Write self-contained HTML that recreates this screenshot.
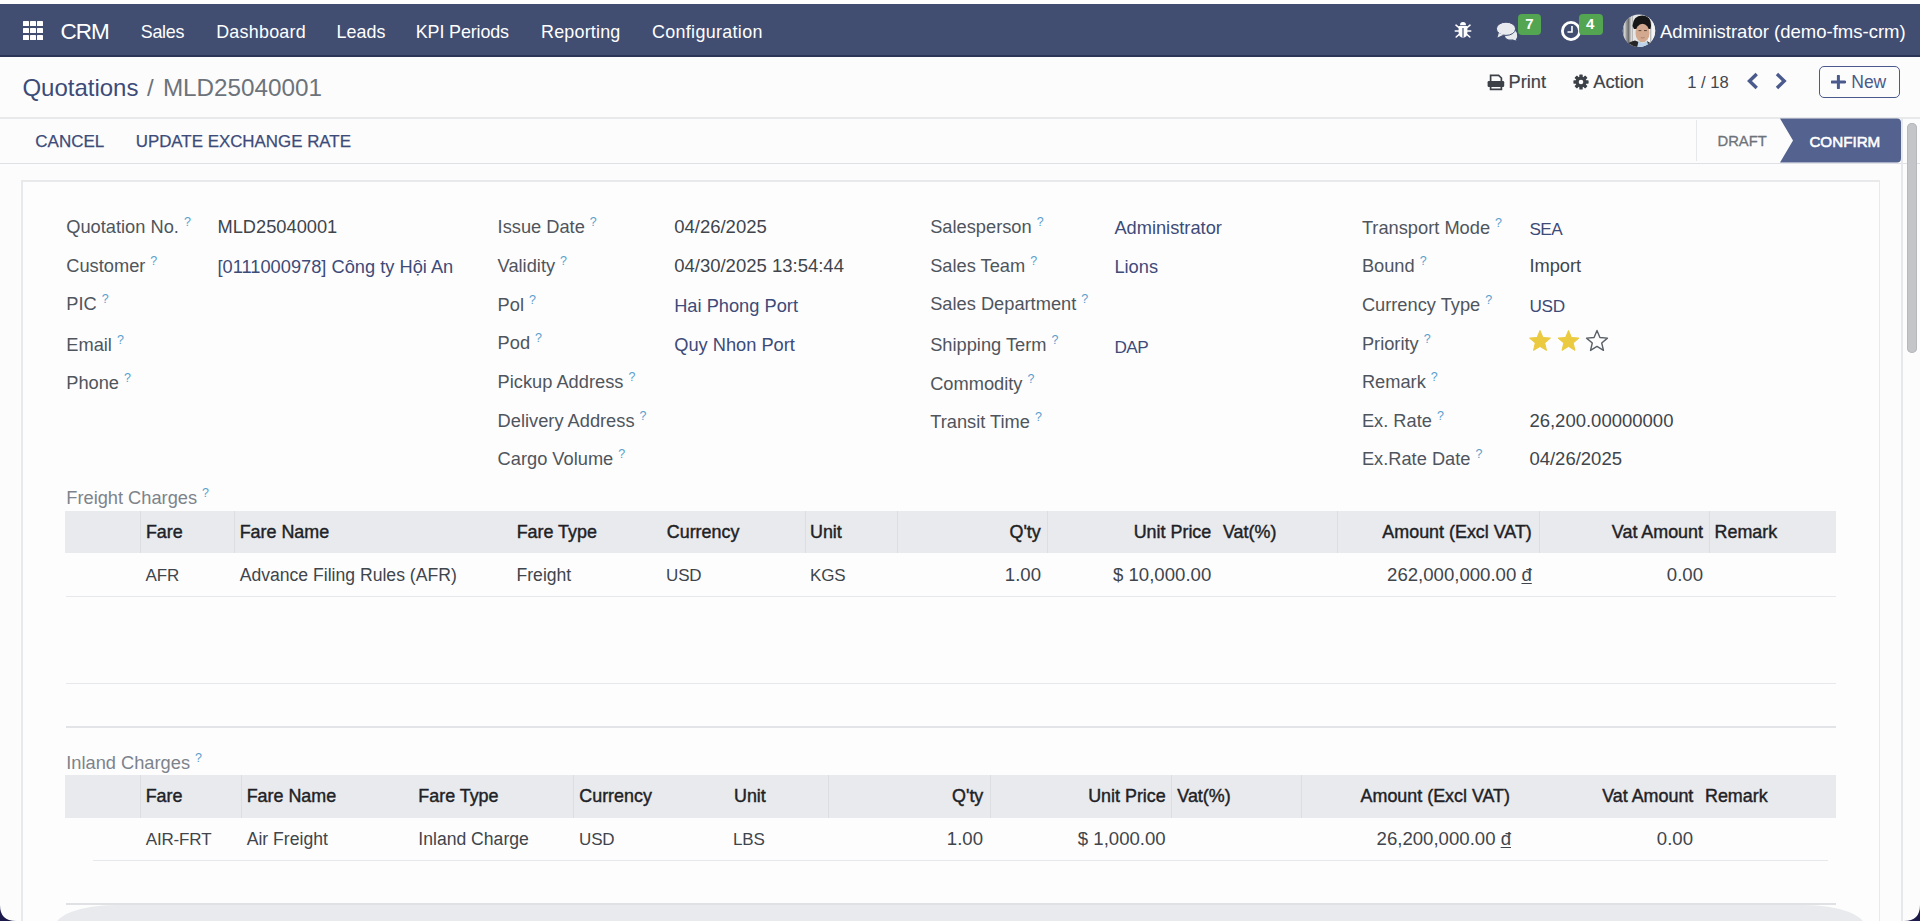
<!DOCTYPE html>
<html><head><meta charset="utf-8"><title>Quotation</title><style>
html,body{margin:0;padding:0;width:1920px;height:921px;overflow:hidden;background:#fcfcfd;}
body{position:relative;font-family:'Liberation Sans', sans-serif;}
.t{position:absolute;white-space:nowrap;font-family:'Liberation Sans', sans-serif;}
.r{position:absolute;}
.vnd{text-decoration:underline;text-underline-offset:2px;text-decoration-thickness:1.3px;}
sup.q{font-size:12.5px;color:#5b9fcc;vertical-align:0;position:relative;top:-7px;margin-left:5px;}
</style></head>
<body>
<div class="r" style="left:0px;top:0px;width:1920px;height:921px;background:#fcfcfd;"></div>
<div class="r" style="left:0px;top:0px;width:1920px;height:4px;background:#ffffff;"></div>
<div class="r" style="left:0px;top:4px;width:1920px;height:52px;background:#414e72;"></div>
<div class="r" style="left:0px;top:55px;width:1920px;height:1.5px;background:#2b3656;"></div>
<div class="r" style="left:23px;top:20.6px;width:5.6px;height:5.6px;background:#ffffff;border-radius:0.6px"></div>
<div class="r" style="left:23px;top:27.6px;width:5.6px;height:5.6px;background:#ffffff;border-radius:0.6px"></div>
<div class="r" style="left:23px;top:34.6px;width:5.6px;height:5.6px;background:#ffffff;border-radius:0.6px"></div>
<div class="r" style="left:30px;top:20.6px;width:5.6px;height:5.6px;background:#ffffff;border-radius:0.6px"></div>
<div class="r" style="left:30px;top:27.6px;width:5.6px;height:5.6px;background:#ffffff;border-radius:0.6px"></div>
<div class="r" style="left:30px;top:34.6px;width:5.6px;height:5.6px;background:#ffffff;border-radius:0.6px"></div>
<div class="r" style="left:37px;top:20.6px;width:5.6px;height:5.6px;background:#ffffff;border-radius:0.6px"></div>
<div class="r" style="left:37px;top:27.6px;width:5.6px;height:5.6px;background:#ffffff;border-radius:0.6px"></div>
<div class="r" style="left:37px;top:34.6px;width:5.6px;height:5.6px;background:#ffffff;border-radius:0.6px"></div>
<div class="t" style="top:18.00px;font-size:22.5px;line-height:28px;color:#fff;letter-spacing:-1px;left:60.5px;">CRM</div>
<div class="t" style="top:20.60px;font-size:17.9px;line-height:22px;color:#fff;letter-spacing:-0.3px;left:140.8px;">Sales</div>
<div class="t" style="top:20.60px;font-size:17.9px;line-height:22px;color:#fff;letter-spacing:0.25px;left:216.2px;">Dashboard</div>
<div class="t" style="top:20.60px;font-size:17.9px;line-height:22px;color:#fff;letter-spacing:0px;left:336.6px;">Leads</div>
<div class="t" style="top:20.60px;font-size:17.9px;line-height:22px;color:#fff;letter-spacing:-0.13px;left:415.8px;">KPI Periods</div>
<div class="t" style="top:20.60px;font-size:17.9px;line-height:22px;color:#fff;letter-spacing:0.2px;left:541.1px;">Reporting</div>
<div class="t" style="top:20.60px;font-size:17.9px;line-height:22px;color:#fff;letter-spacing:0.33px;left:652px;">Configuration</div>
<div class="t" style="top:19.59px;font-size:18.5px;line-height:23px;color:#fff;left:1660px;">Administrator (demo-fms-crm)</div>
<svg class="r" style="left:1454px;top:21px" width="18" height="18" viewBox="0 0 18 18"><path d="M6 4.2 Q6 1 9 1 Q12 1 12 4.2 Z" fill="#fff"/><path d="M4.6 5 H13.4 V11.5 Q13.4 16.5 9 16.8 Q4.6 16.5 4.6 11.5 Z" fill="#fff"/><rect x="8.4" y="7" width="1.2" height="9.5" fill="#414e72"/><g stroke="#fff" stroke-width="1.6" stroke-linecap="round"><path d="M4.8 6.5 L2 4.2"/><path d="M13.2 6.5 L16 4.2"/><path d="M4.5 10 H1.3"/><path d="M13.5 10 H16.7"/><path d="M5 13.5 L2.2 16"/><path d="M13 13.5 L15.8 16"/></g></svg>
<svg class="r" style="left:1495px;top:21px" width="26" height="21" viewBox="0 0 26 21"><path d="M11 6 Q20 5.5 22.5 12 Q23.5 16 21.5 18.5 L23.5 20 Q19 20 17.5 19 Q12 20 9.5 16 Z" fill="#e9eaed" stroke="#414e72" stroke-width="1.2"/><ellipse cx="11" cy="7.8" rx="9.6" ry="6.6" fill="#e9eaed" stroke="#414e72" stroke-width="1"/><path d="M3.8 12 L2.5 16.5 L8.5 13.8 Z" fill="#e9eaed"/></svg>
<div class="r" style="left:1518px;top:13.5px;width:23px;height:21.5px;background:#53a551;border-radius:4px"></div>
<div class="t" style="top:14.10px;font-size:15px;line-height:19px;color:#fff;font-weight:bold;left:1525.2px;">7</div>
<svg class="r" style="left:1560px;top:20px" width="22" height="22" viewBox="0 0 22 22"><circle cx="11" cy="11" r="8.6" fill="none" stroke="#fff" stroke-width="2.8"/><path d="M12 6 V12 H7.5" fill="none" stroke="#fff" stroke-width="1.6"/></svg>
<div class="r" style="left:1578.75px;top:13.5px;width:24px;height:21.5px;background:#53a551;border-radius:4px"></div>
<div class="t" style="top:14.10px;font-size:15px;line-height:19px;color:#fff;font-weight:bold;left:1586px;">4</div>
<svg class="r" style="left:1622px;top:14px" width="34" height="34" viewBox="0 0 34 34"><defs><clipPath id="av"><circle cx="17" cy="16.8" r="16.2"/></clipPath></defs><g clip-path="url(#av)"><rect width="34" height="34" fill="#e6e6e6"/><rect x="0" y="0" width="11" height="34" fill="#9a9a9a"/><rect x="2" y="0" width="1.6" height="34" fill="#cfcfcf"/><rect x="5.5" y="0" width="1.6" height="34" fill="#6f6f6f"/><rect x="8.5" y="0" width="2" height="34" fill="#d8d8d8"/><rect x="26" y="0" width="8" height="34" fill="#f4f4f4"/><rect x="28" y="8" width="1.4" height="22" fill="#b9b9b9"/><path d="M10.5 12 Q11 1.2 20.5 1.4 Q29.5 1.8 29 11.5 L28.5 15 L12 15 Z" fill="#171717"/><ellipse cx="20.5" cy="19" rx="7" ry="9.3" fill="#d2a98e"/><path d="M12 13.5 Q13 5 20.5 5.2 Q28 5.5 28.6 13 Q25 8.8 20.5 9.2 Q15 9.5 12 13.5 Z" fill="#171717"/><path d="M16.5 16.6 H19.3 M22 16.6 H24.8" stroke="#5b4638" stroke-width="1"/><path d="M18.8 23.6 Q20.6 24.4 22.6 23.6" stroke="#a87a66" stroke-width="0.9" fill="none"/><path d="M3 34 Q5 28 13 26.5 L18 28.5 L15 34 Z" fill="#262626"/><path d="M15 34 L16.5 27 L21 29.5 L25 27 L27 34 Z" fill="#bcd3ea"/><path d="M25 27 L30 30 L31 34 L27 34 Z" fill="#333"/></g></svg>
<svg class="r" style="left:1487px;top:73.5px" width="18" height="17" viewBox="0 0 18 17"><path d="M3.6 7.5 V1.3 H11.6 L14.4 4 V7.5" fill="none" stroke="#3c4148" stroke-width="1.7"/><rect x="0.6" y="7" width="16.6" height="6" rx="1.2" fill="#3c4148"/><path d="M3.6 11.5 V15.3 H14.4 V11.5" fill="none" stroke="#3c4148" stroke-width="1.7"/></svg>
<svg class="r" style="left:1573px;top:73.5px" width="16" height="16" viewBox="0 0 16 16"><g transform="translate(8 8)" fill="#3c4148"><rect x="-1.7" y="-7.6" width="3.4" height="4" rx="0.6" transform="rotate(0)"/><rect x="-1.7" y="-7.6" width="3.4" height="4" rx="0.6" transform="rotate(45)"/><rect x="-1.7" y="-7.6" width="3.4" height="4" rx="0.6" transform="rotate(90)"/><rect x="-1.7" y="-7.6" width="3.4" height="4" rx="0.6" transform="rotate(135)"/><rect x="-1.7" y="-7.6" width="3.4" height="4" rx="0.6" transform="rotate(180)"/><rect x="-1.7" y="-7.6" width="3.4" height="4" rx="0.6" transform="rotate(225)"/><rect x="-1.7" y="-7.6" width="3.4" height="4" rx="0.6" transform="rotate(270)"/><rect x="-1.7" y="-7.6" width="3.4" height="4" rx="0.6" transform="rotate(315)"/><circle r="5.4"/></g><circle cx="8" cy="8" r="2.3" fill="#fcfcfd"/></svg>
<svg class="r" style="left:1745px;top:72px" width="44" height="18" viewBox="0 0 44 18"><path d="M10.5 3.2 L4.5 9 L10.5 14.8" fill="none" stroke="#4a5a8c" stroke-width="3.4" stroke-linecap="square"/><path d="M33.2 3.2 L39.2 9 L33.2 14.8" fill="none" stroke="#4a5a8c" stroke-width="3.4" stroke-linecap="square"/></svg>
<div class="r" style="left:1819px;top:65.5px;width:81px;height:32.2px;background:transparent;border:1.6px solid #4a5a8c;border-radius:5px;box-sizing:border-box"></div>
<svg class="r" style="left:1831px;top:74.5px" width="15" height="14" viewBox="0 0 15 14"><path d="M7.4 1 V13 M1 7 H13.8" stroke="#4a5a8c" stroke-width="3" stroke-linecap="round"/></svg>
<div class="t" style="top:70.74px;font-size:17.5px;line-height:22px;color:#4a5a8c;left:1851.25px;">New</div>
<div class="r" style="left:0px;top:117px;width:1920px;height:2px;background:#e8e9eb;"></div>
<div class="t" style="top:73.48px;font-size:24px;line-height:30px;color:#3d4b78;left:22.4px;">Quotations</div>
<div class="t" style="top:73.48px;font-size:24px;line-height:30px;color:#6c737a;left:147px;">/</div>
<div class="t" style="top:73.40px;font-size:24.25px;line-height:30px;color:#6c737a;left:162.9px;">MLD25040001</div>
<div class="t" style="top:70.18px;font-size:18.25px;line-height:23px;color:#3e434a;left:1508.5px;-webkit-text-stroke:0.2px #3e434a;">Print</div>
<div class="t" style="top:70.18px;font-size:18.25px;line-height:23px;color:#3e434a;left:1593.3px;-webkit-text-stroke:0.2px #3e434a;">Action</div>
<div class="t" style="top:71.75px;font-size:16.6px;line-height:21px;color:#42474e;left:1687.2px;">1 / 18</div>
<div class="r" style="left:0px;top:162.5px;width:1920px;height:1.2px;background:#dfe1e6;"></div>
<div class="t" style="top:131.41px;font-size:17px;line-height:21px;color:#3d4b78;left:35.3px;-webkit-text-stroke:0.25px #3d4b78;">CANCEL</div>
<div class="t" style="top:131.04px;font-size:16.9px;line-height:21px;color:#3d4b78;left:135.7px;-webkit-text-stroke:0.25px #3d4b78;">UPDATE EXCHANGE RATE</div>
<div class="r" style="left:1695.5px;top:120px;width:1px;height:41px;background:#e6e8eb;"></div>
<div class="t" style="top:132.14px;font-size:14.75px;line-height:18px;color:#6c737a;left:1717.5px;-webkit-text-stroke:0.3px #6c737a;">DRAFT</div>
<svg class="r" style="left:1779px;top:118px" width="124" height="46" viewBox="0 0 124 46"><path d="M1 0.5 H118 Q122 0.5 122 4.5 V40.5 Q122 44.5 118 44.5 H1 L14 22.5 Z" fill="#546290"/></svg>
<div class="t" style="top:131.73px;font-size:15.2px;line-height:19px;color:#fff;left:1809.4px;-webkit-text-stroke:0.55px #fff;">CONFIRM</div>
<div class="r" style="left:21px;top:180px;width:1859px;height:760px;background:#fdfdfe;border:2px solid #e8e9eb;border-right-width:1.5px;box-sizing:border-box"></div>
<div class="t" style="top:215.08px;font-size:18.25px;line-height:23px;color:#4f555c;left:66.25px;">Quotation No.<sup class="q">?</sup></div>
<div class="t" style="top:253.68px;font-size:18.25px;line-height:23px;color:#4f555c;left:66.25px;">Customer<sup class="q">?</sup></div>
<div class="t" style="top:292.38px;font-size:18.25px;line-height:23px;color:#4f555c;left:66.25px;">PIC<sup class="q">?</sup></div>
<div class="t" style="top:332.98px;font-size:18.25px;line-height:23px;color:#4f555c;left:66.25px;">Email<sup class="q">?</sup></div>
<div class="t" style="top:371.48px;font-size:18.25px;line-height:23px;color:#4f555c;left:66.25px;">Phone<sup class="q">?</sup></div>
<div class="t" style="top:215.18px;font-size:18.25px;line-height:23px;color:#40454b;left:217.5px;">MLD25040001</div>
<div class="t" style="top:254.68px;font-size:18.25px;line-height:23px;color:#3d4b78;left:217.5px;">[0111000978] Công ty Hội An</div>
<div class="t" style="top:215.08px;font-size:18.25px;line-height:23px;color:#4f555c;left:497.6px;">Issue Date<sup class="q">?</sup></div>
<div class="t" style="top:254.08px;font-size:18.25px;line-height:23px;color:#4f555c;left:497.6px;">Validity<sup class="q">?</sup></div>
<div class="t" style="top:292.78px;font-size:18.25px;line-height:23px;color:#4f555c;left:497.6px;">Pol<sup class="q">?</sup></div>
<div class="t" style="top:331.48px;font-size:18.25px;line-height:23px;color:#4f555c;left:497.6px;">Pod<sup class="q">?</sup></div>
<div class="t" style="top:369.58px;font-size:18.25px;line-height:23px;color:#4f555c;left:497.6px;">Pickup Address<sup class="q">?</sup></div>
<div class="t" style="top:408.58px;font-size:18.25px;line-height:23px;color:#4f555c;left:497.6px;">Delivery Address<sup class="q">?</sup></div>
<div class="t" style="top:446.68px;font-size:18.25px;line-height:23px;color:#4f555c;left:497.6px;">Cargo Volume<sup class="q">?</sup></div>
<div class="t" style="top:215.09px;font-size:18.5px;line-height:23px;color:#40454b;left:674.2px;">04/26/2025</div>
<div class="t" style="top:254.09px;font-size:18.5px;line-height:23px;color:#40454b;left:674.2px;">04/30/2025 13:54:44</div>
<div class="t" style="top:294.18px;font-size:18.25px;line-height:23px;color:#3d4b78;left:674.2px;">Hai Phong Port</div>
<div class="t" style="top:332.68px;font-size:18.25px;line-height:23px;color:#3d4b78;left:674.2px;">Quy Nhon Port</div>
<div class="t" style="top:214.78px;font-size:18.25px;line-height:23px;color:#4f555c;left:930.2px;">Salesperson<sup class="q">?</sup></div>
<div class="t" style="top:254.08px;font-size:18.25px;line-height:23px;color:#4f555c;left:930.2px;">Sales Team<sup class="q">?</sup></div>
<div class="t" style="top:292.28px;font-size:18.25px;line-height:23px;color:#4f555c;left:930.2px;">Sales Department<sup class="q">?</sup></div>
<div class="t" style="top:333.18px;font-size:18.25px;line-height:23px;color:#4f555c;left:930.2px;">Shipping Term<sup class="q">?</sup></div>
<div class="t" style="top:372.18px;font-size:18.25px;line-height:23px;color:#4f555c;left:930.2px;">Commodity<sup class="q">?</sup></div>
<div class="t" style="top:410.48px;font-size:18.25px;line-height:23px;color:#4f555c;left:930.2px;">Transit Time<sup class="q">?</sup></div>
<div class="t" style="top:216.48px;font-size:18.25px;line-height:23px;color:#3d4b78;left:1114.4px;">Administrator</div>
<div class="t" style="top:254.78px;font-size:18.25px;line-height:23px;color:#3d4b78;left:1114.4px;">Lions</div>
<div class="t" style="top:335.54px;font-size:17.2px;line-height:22px;color:#3d4b78;letter-spacing:-0.5px;left:1114.4px;">DAP</div>
<div class="t" style="top:215.88px;font-size:18.25px;line-height:23px;color:#4f555c;left:1361.9px;">Transport Mode<sup class="q">?</sup></div>
<div class="t" style="top:254.08px;font-size:18.25px;line-height:23px;color:#4f555c;left:1361.9px;">Bound<sup class="q">?</sup></div>
<div class="t" style="top:293.38px;font-size:18.25px;line-height:23px;color:#4f555c;left:1361.9px;">Currency Type<sup class="q">?</sup></div>
<div class="t" style="top:331.58px;font-size:18.25px;line-height:23px;color:#4f555c;left:1361.9px;">Priority<sup class="q">?</sup></div>
<div class="t" style="top:369.88px;font-size:18.25px;line-height:23px;color:#4f555c;left:1361.9px;">Remark<sup class="q">?</sup></div>
<div class="t" style="top:409.18px;font-size:18.25px;line-height:23px;color:#4f555c;left:1361.9px;">Ex. Rate<sup class="q">?</sup></div>
<div class="t" style="top:447.38px;font-size:18.25px;line-height:23px;color:#4f555c;left:1361.9px;">Ex.Rate Date<sup class="q">?</sup></div>
<div class="t" style="top:217.74px;font-size:17.2px;line-height:22px;color:#3d4b78;letter-spacing:-0.5px;left:1529.4px;">SEA</div>
<div class="t" style="top:254.18px;font-size:18.25px;line-height:23px;color:#40454b;left:1529.4px;">Import</div>
<div class="t" style="top:295.24px;font-size:17.2px;line-height:22px;color:#3d4b78;letter-spacing:-0.2px;left:1529.4px;">USD</div>
<div class="t" style="top:409.09px;font-size:18.5px;line-height:23px;color:#40454b;left:1529.4px;">26,200.00000000</div>
<div class="t" style="top:447.29px;font-size:18.5px;line-height:23px;color:#40454b;left:1529.4px;">04/26/2025</div>
<svg class="r" style="left:1525px;top:326px" width="90" height="30" viewBox="0 0 90 30"><polygon points="15.00,4.50 17.91,11.50 25.46,12.10 19.71,17.03 21.47,24.40 15.00,20.45 8.53,24.40 10.29,17.03 4.54,12.10 12.09,11.50" fill="#ebca40" stroke="#ebca40" stroke-width="1" stroke-linejoin="round"/><polygon points="43.50,4.50 46.41,11.50 53.96,12.10 48.21,17.03 49.97,24.40 43.50,20.45 37.03,24.40 38.79,17.03 33.04,12.10 40.59,11.50" fill="#ebca40" stroke="#ebca40" stroke-width="1" stroke-linejoin="round"/><polygon points="72.00,4.50 74.91,11.50 82.46,12.10 76.71,17.03 78.47,24.40 72.00,20.45 65.53,24.40 67.29,17.03 61.54,12.10 69.09,11.50" fill="none" stroke="#5a6068" stroke-width="1.4" stroke-linejoin="round"/></svg>
<div class="t" style="top:486.38px;font-size:18.25px;line-height:23px;color:#7d838b;left:66.25px;">Freight Charges<sup class="q">?</sup></div>
<div class="r" style="left:65px;top:511px;width:1771px;height:42.39999999999998px;background:#e9eaed;"></div>
<div class="r" style="left:139.6px;top:511px;width:1px;height:42.39999999999998px;background:#dcdee2;"></div>
<div class="r" style="left:233.5px;top:511px;width:1px;height:42.39999999999998px;background:#dcdee2;"></div>
<div class="r" style="left:804.5px;top:511px;width:1px;height:42.39999999999998px;background:#dcdee2;"></div>
<div class="r" style="left:896.8px;top:511px;width:1px;height:42.39999999999998px;background:#dcdee2;"></div>
<div class="r" style="left:1046.7px;top:511px;width:1px;height:42.39999999999998px;background:#dcdee2;"></div>
<div class="r" style="left:1337.4px;top:511px;width:1px;height:42.39999999999998px;background:#dcdee2;"></div>
<div class="r" style="left:1539px;top:511px;width:1px;height:42.39999999999998px;background:#dcdee2;"></div>
<div class="r" style="left:1709.2px;top:511px;width:1px;height:42.39999999999998px;background:#dcdee2;"></div>
<div class="t" style="top:521.00px;font-size:17.9px;line-height:22px;color:#1e2226;left:145.9px;-webkit-text-stroke:0.42px #1e2226;">Fare</div>
<div class="t" style="top:521.00px;font-size:17.9px;line-height:22px;color:#1e2226;left:239.7px;-webkit-text-stroke:0.42px #1e2226;">Fare Name</div>
<div class="t" style="top:521.00px;font-size:17.9px;line-height:22px;color:#1e2226;left:516.7px;-webkit-text-stroke:0.42px #1e2226;">Fare Type</div>
<div class="t" style="top:521.00px;font-size:17.9px;line-height:22px;color:#1e2226;left:666.8px;-webkit-text-stroke:0.42px #1e2226;">Currency</div>
<div class="t" style="top:521.00px;font-size:17.9px;line-height:22px;color:#1e2226;left:810px;-webkit-text-stroke:0.42px #1e2226;">Unit</div>
<div class="t" style="top:521.00px;font-size:17.9px;line-height:22px;color:#1e2226;right:879.25px;text-align:right;-webkit-text-stroke:0.42px #1e2226;">Q'ty</div>
<div class="t" style="top:521.00px;font-size:17.9px;line-height:22px;color:#1e2226;right:708.75px;text-align:right;-webkit-text-stroke:0.42px #1e2226;">Unit Price</div>
<div class="t" style="top:521.00px;font-size:17.9px;line-height:22px;color:#1e2226;left:1223px;-webkit-text-stroke:0.42px #1e2226;">Vat(%)</div>
<div class="t" style="top:521.00px;font-size:17.9px;line-height:22px;color:#1e2226;right:388.20000000000005px;text-align:right;-webkit-text-stroke:0.42px #1e2226;">Amount (Excl VAT)</div>
<div class="t" style="top:521.00px;font-size:17.9px;line-height:22px;color:#1e2226;right:217px;text-align:right;-webkit-text-stroke:0.42px #1e2226;">Vat Amount</div>
<div class="t" style="top:521.00px;font-size:17.9px;line-height:22px;color:#1e2226;left:1714.6px;-webkit-text-stroke:0.42px #1e2226;">Remark</div>
<div class="t" style="top:564.81px;font-size:17px;line-height:21px;color:#40454b;letter-spacing:-0.15px;left:145.6px;">AFR</div>
<div class="t" style="top:564.10px;font-size:17.6px;line-height:22px;color:#40454b;left:239.7px;">Advance Filing Rules (AFR)</div>
<div class="t" style="top:564.10px;font-size:17.6px;line-height:22px;color:#40454b;left:516.5px;">Freight</div>
<div class="t" style="top:564.81px;font-size:17px;line-height:21px;color:#40454b;letter-spacing:-0.15px;left:666px;">USD</div>
<div class="t" style="top:564.81px;font-size:17px;line-height:21px;color:#40454b;letter-spacing:-0.15px;left:810px;">KGS</div>
<div class="t" style="top:563.26px;font-size:18.6px;line-height:23px;color:#40454b;right:879px;text-align:right;">1.00</div>
<div class="t" style="top:563.26px;font-size:18.6px;line-height:23px;color:#40454b;right:708.75px;text-align:right;">$ 10,000.00</div>
<div class="t" style="top:563.26px;font-size:18.6px;line-height:23px;color:#40454b;right:388.20000000000005px;text-align:right;">262,000,000.00 <span class="vnd">đ</span></div>
<div class="t" style="top:563.26px;font-size:18.6px;line-height:23px;color:#40454b;right:217px;text-align:right;">0.00</div>
<div class="r" style="left:66px;top:596px;width:1770px;height:1.2px;background:#e6e8eb;"></div>
<div class="r" style="left:66px;top:683px;width:1770px;height:1.2px;background:#e6e8eb;"></div>
<div class="r" style="left:66px;top:726.2px;width:1770px;height:1.5px;background:#e2e4e8;"></div>
<div class="t" style="top:751.48px;font-size:18.25px;line-height:23px;color:#7d838b;left:66.25px;">Inland Charges<sup class="q">?</sup></div>
<div class="r" style="left:65px;top:775px;width:1771px;height:42.700000000000045px;background:#e9eaed;"></div>
<div class="r" style="left:139.5px;top:775px;width:1px;height:42.700000000000045px;background:#dcdee2;"></div>
<div class="r" style="left:241.4px;top:775px;width:1px;height:42.700000000000045px;background:#dcdee2;"></div>
<div class="r" style="left:573.4px;top:775px;width:1px;height:42.700000000000045px;background:#dcdee2;"></div>
<div class="r" style="left:827.5px;top:775px;width:1px;height:42.700000000000045px;background:#dcdee2;"></div>
<div class="r" style="left:989.5px;top:775px;width:1px;height:42.700000000000045px;background:#dcdee2;"></div>
<div class="r" style="left:1171px;top:775px;width:1px;height:42.700000000000045px;background:#dcdee2;"></div>
<div class="r" style="left:1301.3px;top:775px;width:1px;height:42.700000000000045px;background:#dcdee2;"></div>
<div class="t" style="top:785.00px;font-size:17.9px;line-height:22px;color:#1e2226;left:145.7px;-webkit-text-stroke:0.42px #1e2226;">Fare</div>
<div class="t" style="top:785.00px;font-size:17.9px;line-height:22px;color:#1e2226;left:246.7px;-webkit-text-stroke:0.42px #1e2226;">Fare Name</div>
<div class="t" style="top:785.00px;font-size:17.9px;line-height:22px;color:#1e2226;left:418.3px;-webkit-text-stroke:0.42px #1e2226;">Fare Type</div>
<div class="t" style="top:785.00px;font-size:17.9px;line-height:22px;color:#1e2226;left:579.3px;-webkit-text-stroke:0.42px #1e2226;">Currency</div>
<div class="t" style="top:785.00px;font-size:17.9px;line-height:22px;color:#1e2226;left:734px;-webkit-text-stroke:0.42px #1e2226;">Unit</div>
<div class="t" style="top:785.00px;font-size:17.9px;line-height:22px;color:#1e2226;right:936.7px;text-align:right;-webkit-text-stroke:0.42px #1e2226;">Q'ty</div>
<div class="t" style="top:785.00px;font-size:17.9px;line-height:22px;color:#1e2226;right:754.3px;text-align:right;-webkit-text-stroke:0.42px #1e2226;">Unit Price</div>
<div class="t" style="top:785.00px;font-size:17.9px;line-height:22px;color:#1e2226;left:1177.3px;-webkit-text-stroke:0.42px #1e2226;">Vat(%)</div>
<div class="t" style="top:785.00px;font-size:17.9px;line-height:22px;color:#1e2226;right:410px;text-align:right;-webkit-text-stroke:0.42px #1e2226;">Amount (Excl VAT)</div>
<div class="t" style="top:785.00px;font-size:17.9px;line-height:22px;color:#1e2226;right:226.70000000000005px;text-align:right;-webkit-text-stroke:0.42px #1e2226;">Vat Amount</div>
<div class="t" style="top:785.00px;font-size:17.9px;line-height:22px;color:#1e2226;left:1705px;-webkit-text-stroke:0.42px #1e2226;">Remark</div>
<div class="t" style="top:829.01px;font-size:17px;line-height:21px;color:#40454b;letter-spacing:-0.15px;left:145.7px;">AIR-FRT</div>
<div class="t" style="top:828.30px;font-size:17.6px;line-height:22px;color:#40454b;left:246.7px;">Air Freight</div>
<div class="t" style="top:828.30px;font-size:17.6px;line-height:22px;color:#40454b;left:418.3px;">Inland Charge</div>
<div class="t" style="top:829.01px;font-size:17px;line-height:21px;color:#40454b;letter-spacing:-0.15px;left:579px;">USD</div>
<div class="t" style="top:829.01px;font-size:17px;line-height:21px;color:#40454b;letter-spacing:-0.15px;left:733px;">LBS</div>
<div class="t" style="top:827.46px;font-size:18.6px;line-height:23px;color:#40454b;right:937px;text-align:right;">1.00</div>
<div class="t" style="top:827.46px;font-size:18.6px;line-height:23px;color:#40454b;right:754.3px;text-align:right;">$ 1,000.00</div>
<div class="t" style="top:827.46px;font-size:18.6px;line-height:23px;color:#40454b;right:409px;text-align:right;">26,200,000.00 <span class="vnd">đ</span></div>
<div class="t" style="top:827.46px;font-size:18.6px;line-height:23px;color:#40454b;right:227px;text-align:right;">0.00</div>
<div class="r" style="left:93px;top:860.2px;width:1735px;height:1.2px;background:#e6e8eb;"></div>
<div class="r" style="left:66px;top:903px;width:1770px;height:1.5px;background:#dfe1e5;"></div>
<div class="r" style="left:55px;top:905px;width:1810px;height:40px;background:#e9eaed;border-radius:60px 60px 0 0/22px 22px 0 0"></div>
<div class="r" style="left:1901.3px;top:119px;width:1.6px;height:802px;background:#e6e8eb;"></div>
<div class="r" style="left:1907px;top:123px;width:10px;height:230px;background:#c4c5c9;border-radius:5px;box-shadow:inset 0 0 0 0.8px #b3b5ba"></div>
<svg class="r" style="left:0;top:905px" width="16" height="16" viewBox="0 0 16 16"><path d="M0 0 Q0 16 16 16 H0 Z" fill="#1c1a4a"/></svg>
<svg class="r" style="left:1904px;top:905px" width="16" height="16" viewBox="0 0 16 16"><path d="M16 0 Q16 16 0 16 H16 Z" fill="#1c1a4a"/></svg>
</body></html>
